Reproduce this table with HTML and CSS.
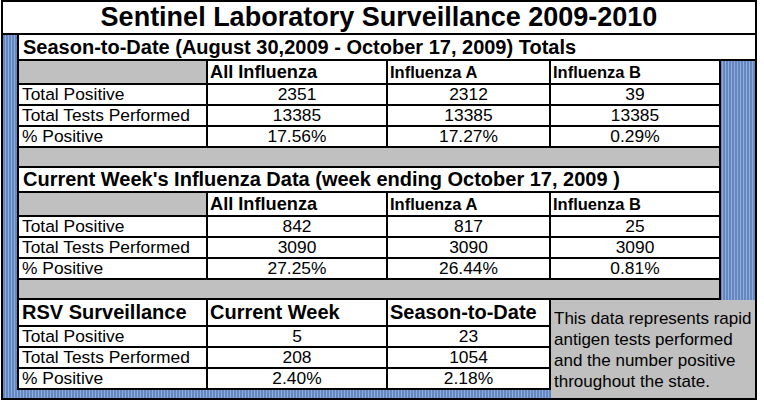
FILE: index.html
```html
<!DOCTYPE html>
<html>
<head>
<meta charset="utf-8">
<title>Sentinel Laboratory Surveillance 2009-2010</title>
<link rel="stylesheet" href="styles.css">
</head>
<body>
<div class="frame">
  <div class="title">Sentinel Laboratory Surveillance 2009-2010</div>
  <div class="main">
    <div class="section-head wide">Season-to-Date (August 30,2009 - October 17, 2009) Totals</div>
    <table class="grid">
      <colgroup><col class="c1"><col class="c2"><col class="c3"><col class="c4"></colgroup>
      <tr class="head">
        <td class="blank"></td>
        <th class="big">All Influenza</th>
        <th>Influenza A</th>
        <th>Influenza B</th>
      </tr>
      <tr><td class="label">Total Positive</td><td>2351</td><td>2312</td><td>39</td></tr>
      <tr><td class="label">Total Tests Performed</td><td>13385</td><td>13385</td><td>13385</td></tr>
      <tr><td class="label">% Positive</td><td>17.56%</td><td>17.27%</td><td>0.29%</td></tr>
    </table>
    <div class="spacer"></div>
    <div class="section-head narrow">Current Week's Influenza Data (week ending October 17, 2009 )</div>
    <table class="grid">
      <colgroup><col class="c1"><col class="c2"><col class="c3"><col class="c4"></colgroup>
      <tr class="head">
        <td class="blank"></td>
        <th class="big">All Influenza</th>
        <th>Influenza A</th>
        <th>Influenza B</th>
      </tr>
      <tr><td class="label">Total Positive</td><td>842</td><td>817</td><td>25</td></tr>
      <tr><td class="label">Total Tests Performed</td><td>3090</td><td>3090</td><td>3090</td></tr>
      <tr><td class="label">% Positive</td><td>27.25%</td><td>26.44%</td><td>0.81%</td></tr>
    </table>
    <div class="spacer"></div>
    <div class="rsv">
      <table class="grid rsv-table">
        <colgroup><col class="c1"><col class="c2"><col class="c3"></colgroup>
        <tr class="rsv-head">
          <th>RSV Surveillance</th>
          <th>Current Week</th>
          <th>Season-to-Date</th>
        </tr>
        <tr><td class="label">Total Positive</td><td>5</td><td>23</td></tr>
        <tr><td class="label">Total Tests Performed</td><td>208</td><td>1054</td></tr>
        <tr><td class="label">% Positive</td><td>2.40%</td><td>2.18%</td></tr>
      </table>
      <div class="note">This data represents rapid antigen tests performed and the number positive throughout the state.</div>
    </div>
  </div>
</div>
</body>
</html>
```
FILE: styles.css
```css
* {
  box-sizing: border-box;
}

body {
  margin: 0;
  background: #fff;
  font-family: "Liberation Sans", Arial, sans-serif;
  color: #000;
}

.frame {
  margin-left: 1px;
  width: 756px;
  border: 2px solid #000;
  background: #fff;
}

.title {
  height: 33px;
  border-bottom: 2px solid #000;
  font-size: 27px;
  font-weight: bold;
  line-height: 31px;
  text-align: center;
  background: #fff;
}

.main {
  display: flex;
  flex-direction: column;
  align-items: flex-start;
  padding-left: 14px;
  height: 363px;
  background: repeating-linear-gradient(90deg, #6487c2 0 2px, #8fadda 2px 3px);
}

.section-head {
  background: #fff;
  border-left: 2px solid #000;
  border-bottom: 2px solid #000;
  font-size: 20px;
  font-weight: bold;
  padding-left: 4px;
  white-space: nowrap;
}

.section-head.wide {
  width: 738px;
  height: 26px;
  line-height: 24px;
}

.section-head.narrow {
  width: 704px;
  height: 25px;
  line-height: 23px;
  border-right: 2px solid #000;
}

.grid {
  border-collapse: separate;
  border-spacing: 0;
  border-left: 2px solid #000;
  table-layout: fixed;
  width: 704px;
  background: #fff;
}

.grid col.c1 { width: 189px; }
.grid col.c2 { width: 180px; }
.grid col.c3 { width: 163px; }
.grid col.c4 { width: 170px; }

.grid td,
.grid th {
  box-sizing: content-box;
  border-right: 2px solid #000;
  border-bottom: 2px solid #000;
  padding: 0;
  height: 19px;
  line-height: 19px;
  font-size: 17.4px;
  font-weight: normal;
  text-align: center;
  white-space: nowrap;
  overflow: hidden;
}

.grid td.label {
  text-align: left;
  padding-left: 3px;
}

.grid .head td,
.grid .head th {
  height: 22px;
  line-height: 22px;
}

.grid .head th {
  font-weight: bold;
  font-size: 16.5px;
  text-align: left;
  padding-left: 2px;
}

.grid .head th.big {
  font-size: 18.2px;
}

.grid td.blank {
  background: #c0c0c0;
}

.spacer {
  width: 704px;
  height: 20px;
  background: #c0c0c0;
  border-left: 2px solid #000;
  border-right: 2px solid #000;
  border-bottom: 2px solid #000;
}

.rsv {
  display: flex;
  align-items: flex-start;
  width: 738px;
}

.grid.rsv-table {
  width: 534px;
}

.grid .rsv-head th {
  height: 25px;
  line-height: 25px;
  font-size: 20px;
  font-weight: bold;
  text-align: left;
  padding-left: 3px;
}

.grid .rsv-head th + th {
  padding-left: 2px;
}

.note {
  width: 204px;
  height: 98px;
  background: #c0c0c0;
  font-size: 17px;
  line-height: 21px;
  padding: 8px 0 0 3px;
}
```
